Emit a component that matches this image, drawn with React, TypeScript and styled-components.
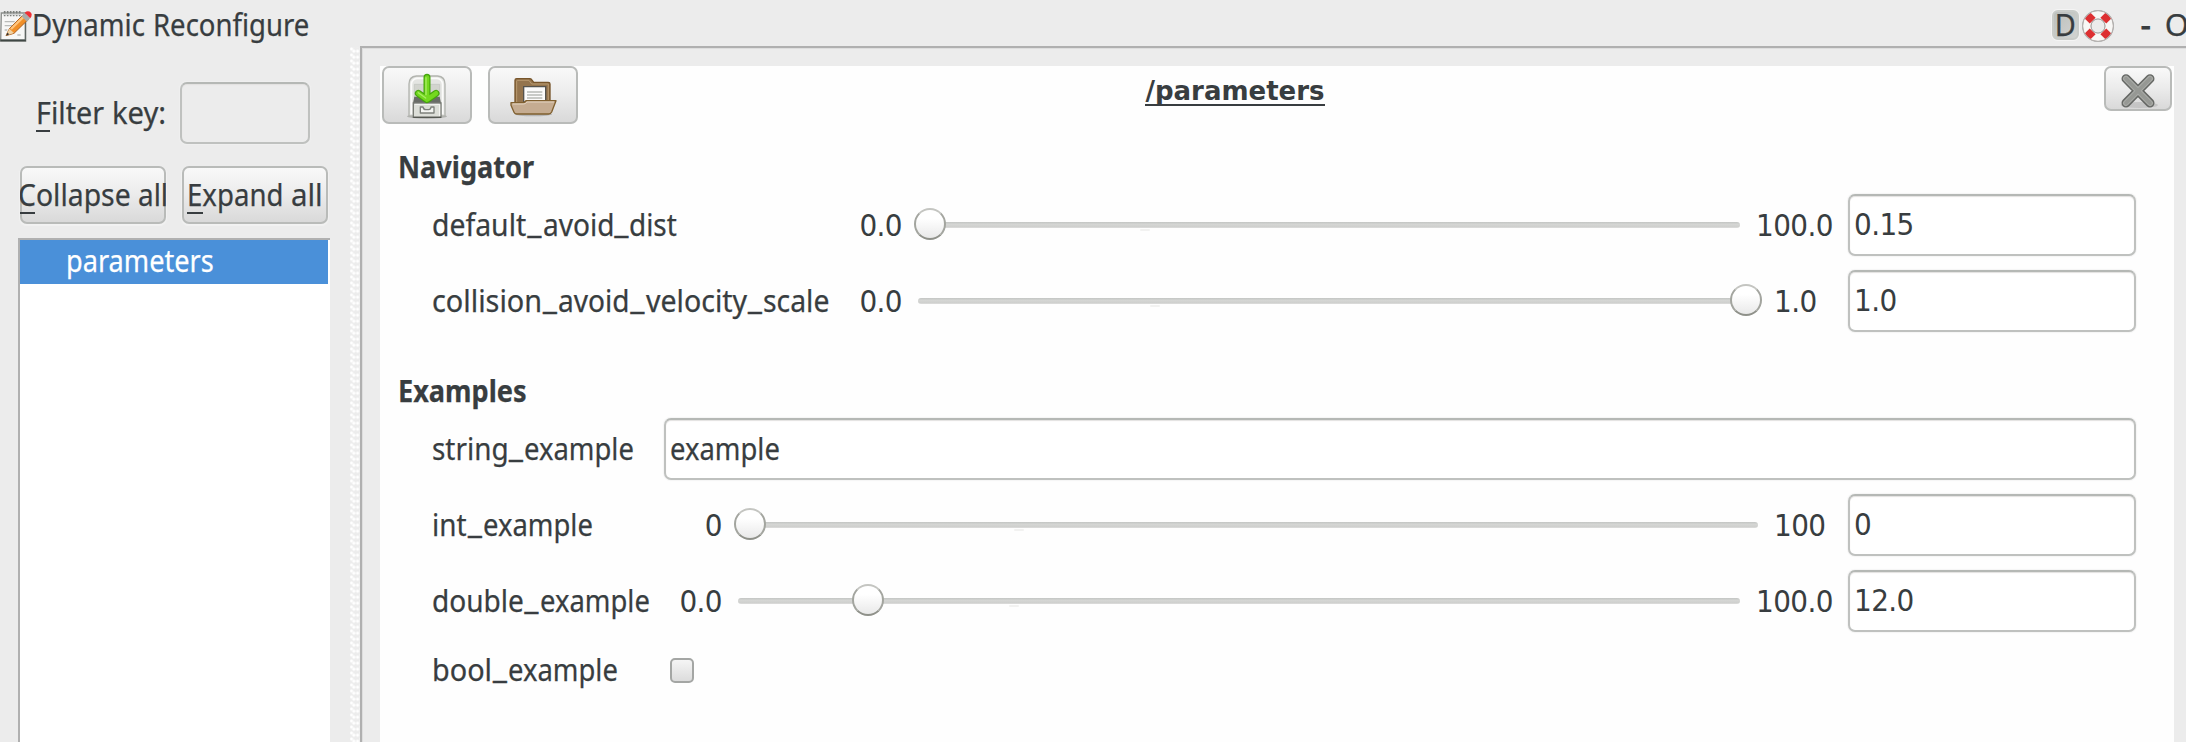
import React from "react";
import styled, { createGlobalStyle, css } from "styled-components";

const ink = "#383d40";
const chrome = "#ececec";
const line = "#b0b0b0";

const Global = createGlobalStyle`
  body { margin: 0; background: ${chrome}; overflow: hidden; }
  * { box-sizing: border-box; }
`;

const Window = styled.div`
  width: 2186px;
  height: 742px;
  display: flex;
  flex-direction: column;
  overflow: hidden;
  background: ${chrome};
  color: ${ink};
  font: 31px/40px "Noto Sans", sans-serif;
  -webkit-text-stroke: 0.25px;
  white-space: nowrap;
`;

/* A word narrowed to the widget font's proportions: w is its width, k its horizontal scale. */
const Word = styled.span<{ w: number; k: number }>`
  display: inline-block;
  width: ${(p) => p.w / p.k}px;
  margin-right: ${(p) => p.w - p.w / p.k}px;
  transform: scaleX(${(p) => p.k});
  transform-origin: 0 50%;
`;

const Underscore = styled.span<{ w?: number }>`
  display: inline-block;
  width: ${(p) => p.w ?? 16}px;
  text-align: center;
  transform: translateY(-3px);
  -webkit-text-stroke: 0.5px;
`;

const Mnemonic = styled.span<{ w: number }>`
  display: inline-block;
  height: 40px;
  background: linear-gradient(${ink}, ${ink}) 0 38px / ${(p) => p.w}px 2px no-repeat;
`;

/* ---------- title bar ---------- */

const TitleBar = styled.header`
  flex: none;
  height: 46px;
  display: flex;
  align-items: flex-start;
  padding-top: 4px;
`;

const TitleIcon = styled.svg`
  flex: none;
  width: 32px;
  height: 33px;
  margin-top: 5px;
`;

const TitleText = styled.div`
  flex: 1;
`;

const TitleControls = styled.div`
  width: 134px;
  flex: none;
  display: flex;
`;

const DockButton = styled.div`
  width: 28px;
  height: 30px;
  margin-top: 6px;
  border: 2px solid #c9ccc9;
  border-radius: 6px;
  background: linear-gradient(135deg, #bcbfbc, #d2d4d2);
  display: flex;
  justify-content: center;
  line-height: 25px;
  box-shadow: 0 0 0 1px #f4f4f4;
`;

const DockLetter = styled.span`
  transform: scaleX(0.93);
`;

const HelpIcon = styled.svg`
  width: 34px;
  height: 34px;
  flex: none;
  margin: 5px 0 0 2px;
`;

const TitleAction = styled.span<{ gap: number; heavy?: boolean }>`
  margin-left: ${(p) => p.gap}px;
  -webkit-text-stroke: ${(p) => (p.heavy ? 1 : 0.25)}px;
`;

/* ---------- body ---------- */

const Body = styled.div`
  flex: 1;
  min-height: 0;
  display: flex;
`;

const Sidebar = styled.aside`
  width: 350px;
  flex: none;
  display: flex;
  flex-direction: column;
`;

const Splitter = styled.div`
  width: 10px;
  flex: none;
  margin-top: 1px;
  background-image: radial-gradient(circle, #fff 1.2px, transparent 1.9px),
    radial-gradient(circle, #fff 1.2px, transparent 1.9px),
    radial-gradient(circle, #fff 1.2px, transparent 1.9px);
  background-size: 10px 6px;
  background-position: -3.5px -1px, -1.2px 1.2px, 2.6px 1.2px;
`;

const FilterRow = styled.div`
  display: flex;
  padding: 36px 0 0 36px;
`;

const FilterLabel = styled.label`
  width: 144px;
  padding-top: 10px;
`;

const Field = styled.div<{ w: number; plain?: boolean }>`
  width: ${(p) => p.w}px;
  height: 62px;
  flex: none;
  padding: 8px 0 0 4px;
  border: 2px solid #bfc1bf;
  border-top-color: #b5b8b5;
  border-radius: 7px;
  background: ${(p) => (p.plain ? chrome : "#fff")};
  box-shadow: inset 0 1px 1px #e3e1e0, 0 0 1px 1px ${(p) => (p.plain ? "#f0f0f0" : "#f5f5f5")};
`;

const ButtonRow = styled.div`
  display: flex;
  gap: 16px;
  padding: 22px 0 0 20px;
`;

const buttonFace = css`
  border: 2px solid #b9bbb9;
  border-radius: 7px;
  background: linear-gradient(#f9f9f9, #ebebeb 50%, #d9d9d9);
`;

const TextButton = styled.div`
  ${buttonFace}
  width: 146px;
  height: 58px;
  overflow: clip;
  overflow-clip-margin: border-box;
  padding-top: 6px;
  box-shadow: 0 1px 1px 1px #f2f2f2;
`;

const ButtonLabel = styled.div<{ shift: number }>`
  margin-left: ${(p) => p.shift}px;
`;

const NodeTree = styled.div`
  flex: 1;
  margin: 14px 20px 0 18px;
  padding-right: 2px;
  background: #fff;
  border-left: 2px solid ${line};
  border-top: 2px solid ${line};
`;

const NodeItem = styled.div`
  height: 44px;
  padding: 0 0 0 46px;
  background: #4a90d9;
  color: #fff;
`;

const Frame = styled.main`
  flex: 1;
  border: solid ${line};
  border-width: 2px 0 0 2px;
  padding: 17px 12px 0 17px;
  box-shadow: inset 1px 1px 0 #dedede;
  background: ${chrome};
  display: flex;
`;

const Panel = styled.section`
  flex: 1;
  margin: 1px 0 0 1px;
  background: #fefefe;
`;

const Toolbar = styled.div`
  display: grid;
  grid-template-columns: 1fr auto 1fr;
  align-items: start;
  padding: 0 2px;
  height: 58px;
`;

const Tools = styled.div`
  display: flex;
  gap: 16px;
`;

const IconButton = styled.div<{ w?: number; h?: number }>`
  ${buttonFace}
  width: ${(p) => p.w ?? 90}px;
  height: ${(p) => p.h ?? 58}px;
  display: flex;
  align-items: center;
  justify-content: center;
  justify-self: end;
  & > svg {
    overflow: visible;
  }
`;

const NodeName = styled.h1`
  margin: 0;
  padding-top: 10px;
  height: 40px;
  font: bold 26px/30px "DejaVu Sans", sans-serif;
  -webkit-text-stroke: 0;
  border-bottom: 2px solid ${ink};
  transform: translateX(-42px);
`;

const GroupTitle = styled.h2<{ top: number }>`
  margin: ${(p) => p.top}px 0 0 18px;
  font: bold 31px/40px "Noto Sans", sans-serif;
`;

const Rows = styled.div`
  padding: 1px 38px 0 52px;
`;

const Row = styled.div<{ h?: number }>`
  height: ${(p) => p.h ?? 76}px;
  display: flex;
  align-items: center;
`;

const Lead = styled.div<{ w: number }>`
  width: ${(p) => p.w}px;
  flex: none;
  display: flex;
  align-items: center;
  justify-content: space-between;
`;

const Name = styled.div`
  padding-bottom: 2px;
`;

const Num = styled.span`
  display: block;
  font-family: "DejaVu Sans Condensed", "DejaVu Sans", sans-serif;
  font-stretch: condensed;
  letter-spacing: -0.6px;
  -webkit-text-stroke: 0;
`;

const Max = styled.div<{ w: number }>`
  width: ${(p) => p.w}px;
  flex: none;
  padding: 0 0 1px 1px;
`;

const Track = styled.div<{ tick: number }>`
  position: relative;
  flex: 1;
  height: 6px;
  margin: 0 15px 0 16px;
  border-radius: 3px;
  background: linear-gradient(#c3c5c3, #d5d6d4 40%, #cfd0ce 80%, #e0e0df);
  &::after {
    content: "";
    position: absolute;
    left: ${(p) => p.tick}px;
    top: 7px;
    width: 10px;
    height: 2px;
    border-radius: 1px;
    background: #f2f2f1;
  }
`;

const Handle = styled.div`
  position: absolute;
  top: -14px;
  width: 32px;
  height: 32px;
  margin-left: -16px;
  border-radius: 50%;
  border: 2px solid #a3a59f;
  border-top-color: #c4c5c1;
  border-bottom-color: #8f918a;
  background: linear-gradient(#fff 30%, #e9e9e9);
`;

const Checkbox = styled.div`
  width: 24px;
  height: 25px;
  margin-left: 238px;
  border: 2px solid #a4a6a4;
  border-radius: 5px;
  background: linear-gradient(#f5f5f5, #dcdcdc);
`;

/* ---------- icons ---------- */

const NotepadIcon = () => (
  <TitleIcon viewBox="0 28 96 99">
    <path d="M4 40H77V124H2Z" fill="#f7f7f6" stroke="#8a8d8a" strokeWidth="4" />
    <path d="M1 122H78" stroke="#3f4744" strokeWidth="6" />
    <path d="M76 60V122" stroke="#5f6663" strokeWidth="4" />
    <path d="M14 34V50M23 34V50M32 34V50M41 34V50M50 34V50M59 34V50" stroke="#7d807d" strokeWidth="5" />
    <path d="M10 44H64" stroke="#d5d6d5" strokeWidth="4" />
    <path d="M14 66H44M14 78H36M14 91H22M52 106H62" stroke="#b9bbb9" strokeWidth="4" />
    <path d="M18 108L29 86L72 43L87 57L42 101Z" fill="#f08f28" stroke="#b0601c" strokeWidth="3" />
    <path d="M33 88L72 50" stroke="#ffc47c" strokeWidth="7" />
    <path d="M18 108L28 87L42 100Z" fill="#efd2a4" />
    <path d="M18 108L22 99L28 104Z" fill="#2e2e2e" />
    <path d="M64 49L74 39L91 55L81 66Z" fill="#a9acaa" />
    <path d="M74 39Q84 31 93 39Q98 46 91 56Z" fill="#ef2f35" />
  </TitleIcon>
);

/* Four red bands sit on the diagonals of the white ring. */
const LifebuoyIcon = () => (
  <HelpIcon viewBox="-51 -51 102 102">
    <circle r="34" fill="none" stroke="#a9aba9" strokeWidth="28" />
    <circle r="34" fill="none" stroke="#f8f7f5" strokeWidth="23" />
    <g stroke="#dd2f31" strokeWidth="25">
      <path d="M16 16L32 32M-16 16L-32 32M16 -16L32 -32M-16 -16L-32 -32" />
    </g>
    <circle r="21" fill="none" stroke="#a39a98" strokeWidth="2" />
    <circle r="46" fill="none" stroke="#b5b0ae" strokeWidth="3" />
  </HelpIcon>
);

const SaveIcon = () => (
  <svg width="40" height="46" viewBox="168 96 120 138">
    <ellipse cx="228" cy="229" rx="60" ry="7" fill="#8b8d89" opacity=".55" />
    <path d="M174 228V132Q174 110 196 108H260Q282 110 282 132V228Z" fill="#e4e5e2" stroke="#b2b4af" strokeWidth="4" />
    <path d="M181 222V134Q182 117 198 115H258Q274 117 275 134V222" fill="none" stroke="#fbfbfa" strokeWidth="5" />
    <path d="M190 133H266V184H190Z" fill="#d2d4ce" stroke="#c0c2bc" strokeWidth="2" />
    <path d="M190 170H266L270 190H186Z" fill="#696c67" />
    <path d="M187 189H270V232H187Z" fill="#dcded8" stroke="#777a74" strokeWidth="4" />
    <path d="M191 193H266V228" fill="none" stroke="#f7f7f5" strokeWidth="3" />
    <path d="M187 232H270" stroke="#555852" strokeWidth="4" />
    <path d="M208 201H216Q218 209 224 209H233Q239 209 240 201H249V219H208Z" fill="#f4f5f2" stroke="#7d807b" strokeWidth="4" strokeLinejoin="round" />
    <path d="M228 112V176M202 160L228 179L255 160" fill="none" stroke="#44a60c" strokeWidth="21" strokeLinecap="round" strokeLinejoin="round" />
    <path d="M228 113V176M202 160L228 179L255 160" fill="none" stroke="#74d81f" strokeWidth="14" strokeLinecap="round" strokeLinejoin="round" />
    <path d="M225 113V164M202 158L224 174" fill="none" stroke="#a8ee63" strokeWidth="4" strokeLinecap="round" />
  </svg>
);

const FolderIcon = () => (
  <svg width="47" height="40" viewBox="478 105 141 120">
    <ellipse cx="548" cy="223" rx="56" ry="6" fill="#8f8f8f" opacity=".5" />
    <path d="M493 190V121Q493 116 498 116H537Q541 116 543 119L549 127H593Q598 127 598 132V190Z" fill="#94744d" stroke="#77552b" strokeWidth="4" />
    <path d="M498 186V123Q498 121 501 121H535L543 132H593V186" fill="none" stroke="#b8996f" strokeWidth="3" />
    <path d="M519 186V140H585V186Z" fill="#fbfbfb" stroke="#55534e" strokeWidth="4" />
    <path d="M529 156H575M529 165H575M529 174H575" stroke="#b8bab6" strokeWidth="4" />
    <path d="M481 188H517Q523 188 526 182H616L603 216Q600 222 594 222H498Q492 222 490 217L481 196Z" fill="#c5ac91" stroke="#80602f" strokeWidth="4" strokeLinejoin="round" />
    <path d="M486 192H519Q525 192 529 186H610" fill="none" stroke="#e3d3c1" strokeWidth="3" />
  </svg>
);

const CloseIcon = () => (
  <svg width="36" height="36" viewBox="360 211 108 108">
    <ellipse cx="418" cy="313" rx="56" ry="9" fill="#b5b5b5" opacity=".6" />
    <path d="M378 234L450 307M450 234L378 307" stroke="#666865" strokeWidth="27" strokeLinecap="round" />
    <path d="M378 234L450 307M450 234L378 307" stroke="#a8aaa6" strokeWidth="18" strokeLinecap="round" />
    <path d="M378 234L450 307M450 234L378 307" stroke="#969894" strokeWidth="11" strokeLinecap="round" />
  </svg>
);

/* ---------- parameter rows ---------- */

const Example = () => <Word w={110} k={0.885}>example</Word>;

interface SliderRowProps {
  name: React.ReactNode;
  lead: number;
  min: string;
  max: string;
  maxWidth: number;
  value: string;
  fraction: number;
  tick: number;
}

const SliderRow = ({ name, lead, min, max, maxWidth, value, fraction, tick }: SliderRowProps) => (
  <Row>
    <Lead w={lead}>
      <Name>{name}</Name>
      <Num>{min}</Num>
    </Lead>
    <Track tick={tick}>
      <Handle style={{ left: `calc(12px + (100% - 24px) * ${fraction})` }} />
    </Track>
    <Max w={maxWidth}>
      <Num>{max}</Num>
    </Max>
    <Field w={288}>
      <Num>{value}</Num>
    </Field>
  </Row>
);

export default function App() {
  return (
    <Window>
      <Global />
      <TitleBar>
        <NotepadIcon />
        <TitleText>
          <Word w={120.5} k={0.89}>Dynamic </Word>
          <Word w={157} k={0.888}>Reconfigure</Word>
        </TitleText>
        <TitleControls>
          <DockButton>
            <DockLetter>D</DockLetter>
          </DockButton>
          <LifebuoyIcon />
          <TitleAction gap={26} heavy>-</TitleAction>
          <TitleAction gap={14}>O</TitleAction>
        </TitleControls>
      </TitleBar>
      <Body>
        <Sidebar>
          <FilterRow>
            <FilterLabel>
              <Mnemonic w={14}>
                <Word w={76} k={0.925}>Filter</Word>
              </Mnemonic>
              <Word w={54} k={0.94}>key:</Word>
            </FilterLabel>
            <Field w={130} plain />
          </FilterRow>
          <ButtonRow>
            <TextButton>
              <ButtonLabel shift={-4}>
                <Mnemonic w={17}>
                  <Word w={120} k={0.915}>Collapse</Word>
                </Mnemonic>
                <Word w={30} k={0.9}>all</Word>
              </ButtonLabel>
            </TextButton>
            <TextButton>
              <ButtonLabel shift={3}>
                <Mnemonic w={16}>
                  <Word w={104} k={0.89}>Expand</Word>
                </Mnemonic>
                <Word w={32} k={0.95}>all</Word>
              </ButtonLabel>
            </TextButton>
          </ButtonRow>
          <NodeTree>
            <NodeItem>
              <Word w={148} k={0.875}>parameters</Word>
            </NodeItem>
          </NodeTree>
        </Sidebar>
        <Splitter />
        <Frame>
          <Panel>
            <Toolbar>
              <Tools>
                <IconButton><SaveIcon /></IconButton>
                <IconButton><FolderIcon /></IconButton>
              </Tools>
              <NodeName>/parameters</NodeName>
              <IconButton w={68} h={45}><CloseIcon /></IconButton>
            </Toolbar>
            <GroupTitle top={22}>
              <Word w={137} k={0.875}>Navigator</Word>
            </GroupTitle>
            <Rows>
              <SliderRow
                name={<>
                  <Word w={94.5} k={0.915}>default</Word><Underscore>_</Underscore>
                  <Word w={71.5} k={0.905}>avoid</Word><Underscore w={15}>_</Underscore>
                  <Word w={48} k={0.9}>dist</Word>
                </>}
                lead={470} min="0.0" max="100.0" maxWidth={93} value="0.15" fraction={0.0005} tick={222}
              />
              <SliderRow
                name={<>
                  <Word w={110} k={0.93}>collision</Word><Underscore>_</Underscore>
                  <Word w={71.5} k={0.905}>avoid</Word><Underscore>_</Underscore>
                  <Word w={101.5} k={0.92}>velocity</Word><Underscore>_</Underscore>
                  <Word w={67} k={0.915}>scale</Word>
                </>}
                lead={470} min="0.0" max="1.0" maxWidth={75} value="1.0" fraction={1} tick={232}
              />
            </Rows>
            <GroupTitle top={31}>
              <Word w={128.5} k={0.875}>Examples</Word>
            </GroupTitle>
            <Rows>
              <Row>
                <Lead w={232}>
                  <Name><Word w={76} k={0.9}>string</Word><Underscore>_</Underscore><Example /></Name>
                </Lead>
                <Field w={1472}><Example /></Field>
              </Row>
              <SliderRow
                name={<><Word w={35} k={0.9}>int</Word><Underscore>_</Underscore><Example /></>}
                lead={290} min="0" max="100" maxWidth={75} value="0" fraction={0} tick={276}
              />
              <SliderRow
                name={<><Word w={91.5} k={0.905}>double</Word><Underscore>_</Underscore><Example /></>}
                lead={290} min="0.0" max="100.0" maxWidth={93} value="12.0" fraction={0.121} tick={271}
              />
              <Row h={62}>
                <Lead w={0}>
                  <Name><Word w={60} k={0.93}>bool</Word><Underscore>_</Underscore><Example /></Name>
                </Lead>
                <Checkbox />
              </Row>
            </Rows>
          </Panel>
        </Frame>
      </Body>
    </Window>
  );
}
